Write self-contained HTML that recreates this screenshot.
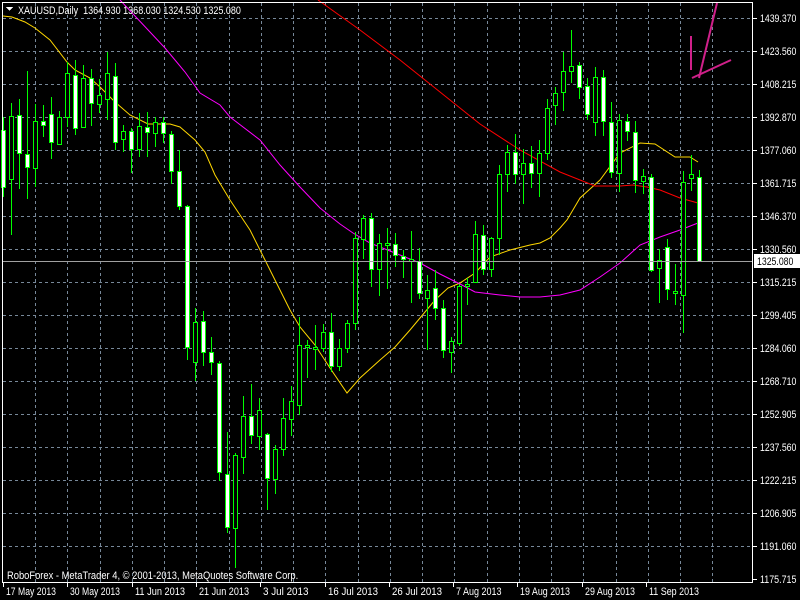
<!DOCTYPE html>
<html><head><meta charset="utf-8"><style>
html,body{margin:0;padding:0;background:#000;width:800px;height:600px;overflow:hidden}
svg{display:block}
text{font-family:"Liberation Sans",sans-serif;font-size:11px;fill:#fff}
</style></head><body>
<svg id="s" width="800" height="600" xmlns="http://www.w3.org/2000/svg" shape-rendering="crispEdges">
<rect width="800" height="600" fill="#000"/>
<g id="grid"></g>
<g id="ma" shape-rendering="auto" fill="none" stroke-width="1"></g>
<g id="cd"></g>
<line x1="2" y1="261.5" x2="752" y2="261.5" stroke="#a0a0a0"/>
<g stroke="#d0208a" stroke-width="2" shape-rendering="auto">
<line x1="717" y1="3" x2="699" y2="78"/>
<line x1="691" y1="36" x2="691" y2="70"/>
<line x1="692" y1="78" x2="731" y2="60"/>
</g>
<rect x="2.5" y="2.5" width="750" height="580" fill="none" stroke="#fff"/>
<g id="ax"></g>
<polygon points="6,7 13,7 9.5,11" fill="#fff"/>
<text class="t" x="18" y="14" xml:space="preserve">XAUUSD,Daily  1364.930 1368.030 1324.530 1325.080</text>
<text class="t" x="7" y="579">RoboForex - MetaTrader 4, © 2001-2013, MetaQuotes Software Corp.</text>
<rect x="754" y="254" width="46" height="14" fill="#fff"/>
<text class="t" x="757" y="265" style="fill:#000">1325.080</text>
</svg>
<script>
var NS="http://www.w3.org/2000/svg";
function el(p,t,a){var e=document.createElementNS(NS,t);for(var k in a)e.setAttribute(k,a[k]);p.appendChild(e);return e;}
var g=document.getElementById('grid');
for(var i=0;i<22;i++){var x=Math.round(35+i*32.25)+0.5;el(g,'line',{x1:x,y1:3,x2:x,y2:582,stroke:'#778899','stroke-dasharray':'3,3'});}
var prices=["1439.370","1423.560","1408.215","1392.870","1377.060","1361.715","1346.370","1330.560","1315.215","1299.405","1284.060","1268.710","1252.905","1237.560","1222.215","1206.905","1191.060","1175.715"];
var ax=document.getElementById('ax');
for(var i=0;i<18;i++){var y=18+i*33;
 if(i<17) el(g,'line',{x1:3,y1:y+0.5,x2:752,y2:y+0.5,stroke:'#778899','stroke-dasharray':'3,3'});
 el(ax,'line',{x1:752,y1:y+0.5,x2:757,y2:y+0.5,stroke:'#fff'});
 var t=el(ax,'text',{x:760,y:y+4,'class':'t'});t.textContent=prices[i];
}
var dates=["17 May 2013","30 May 2013","11 Jun 2013","21 Jun 2013","3 Jul 2013","16 Jul 2013","26 Jul 2013","7 Aug 2013","19 Aug 2013","29 Aug 2013","11 Sep 2013"];
for(var i=0;i<11;i++){var x=Math.round(3+i*64.3);el(ax,'line',{x1:x+0.5,y1:582,x2:x+0.5,y2:587,stroke:'#fff'});var t=el(ax,'text',{x:x+3,y:595,'class':'t'});t.textContent=dates[i];}
var C=[[130,187,117,197,1],[116,179,103,235,0],[115,153,99,189,1],[154,167,71,199,1],[121,168,104,187,0],[121,125,105,137,1],[114,142,97,159,1],[117,144,111,144,0],[73,117,62,127,0],[75,128,60,135,1],[78,127,65,127,0],[78,103,69,126,1],[95,104,79,113,0],[73,99,52,120,0],[76,142,63,150,1],[131,139,125,152,0],[131,149,128,173,1],[126,149,113,157,0],[127,132,112,157,1],[122,133,117,147,0],[122,133,117,143,1],[134,171,131,184,1],[171,206,150,210,1],[206,347,205,360,1],[322,362,308,381,0],[321,352,311,366,1],[352,362,337,375,1],[363,472,361,481,1],[474,527,432,533,1],[455,528,453,568,0],[416,457,396,474,0],[416,435,384,444,1],[410,436,398,450,0],[434,478,433,510,1],[449,479,445,494,0],[418,449,398,456,0],[401,419,386,436,0],[345,405,317,415,0],[345,347,340,378,0],[347,349,325,370,0],[332,348,324,352,0],[332,366,313,372,1],[348,366,339,371,0],[323,348,320,353,0],[238,323,232,330,0],[218,239,215,259,0],[218,269,213,287,1],[243,269,234,296,0],[243,245,228,289,0],[244,255,233,267,1],[256,259,250,278,1],[259,261,231,303,0],[261,293,248,299,1],[290,298,275,350,0],[288,308,270,320,1],[308,350,300,358,1],[341,352,337,373,0],[286,343,284,346,0],[284,286,278,305,0],[234,282,221,283,0],[235,269,225,275,1],[238,269,237,277,0],[174,238,165,255,0],[152,174,145,192,0],[152,174,134,184,1],[163,174,149,204,0],[163,173,146,188,1],[153,173,140,197,0],[108,153,99,160,0],[93,105,87,125,0],[71,92,52,111,0],[66,71,30,83,0],[65,87,62,99,1],[86,114,78,120,1],[77,122,67,136,0],[77,121,70,136,1],[122,172,102,178,1],[120,173,114,192,0],[121,131,114,141,1],[132,180,121,193,1],[176,181,169,194,0],[177,270,174,272,1],[260,268,249,303,0],[247,289,239,300,1],[291,293,264,305,0],[182,295,171,333,0],[174,178,155,191,0],[177,261,170,262,1]];
var cd=document.getElementById('cd');
C.forEach(function(c,i){var x=3+8*i;
 el(cd,'line',{x1:x+0.5,y1:c[2],x2:x+0.5,y2:c[3],stroke:'#00ff00'});
 var h=Math.max(c[1]-c[0],1);
 el(cd,'rect',{x:x-1.5,y:c[0]+0.5,width:4,height:h,fill:c[4]?'#fff':'#000',stroke:'#00ff00'});
});
var ma=document.getElementById('ma');
function pl(pts,col){el(ma,'polyline',{points:pts,stroke:col});}
pl("3,16 12,17 25,22 35,28 50,40 67,62 75,70 90,78 100,87 115,102 130,115 148,124 170,124 180,127 195,140 205,152 215,175 230,200 250,230 265,260 280,290 290,310 300,327 315,345 330,368 347,393 360,378 380,360 395,347 410,330 420,318 435,300 448,288 460,283 475,273 490,257 510,250 530,245 540,243 550,238 560,228 567,220 580,198 600,180 620,153 640,143 655,144 675,157 690,157 698,162","#ffd700");
pl("120,0 165,48 175,60 185,72 200,93 220,105 230,117 260,140 280,165 300,187 320,208 340,224 353,233 370,243 390,251 405,257 420,263 440,274 460,284 475,292 500,295 520,297 540,297 560,295 580,290 600,277 620,263 640,245 660,237 680,230 698,223","#ff00ff");
pl("318,0 360,30 400,60 440,92 480,124 520,150 560,172 595,186 620,186 633,185 647,187 660,190 680,198 698,203","#ff0000");
document.querySelectorAll('text.t').forEach(function(t){var n=t.textContent.length;t.setAttribute('textLength',(n*4.55).toFixed(1));t.setAttribute('lengthAdjust','spacingAndGlyphs');});
</script>
</body></html>
